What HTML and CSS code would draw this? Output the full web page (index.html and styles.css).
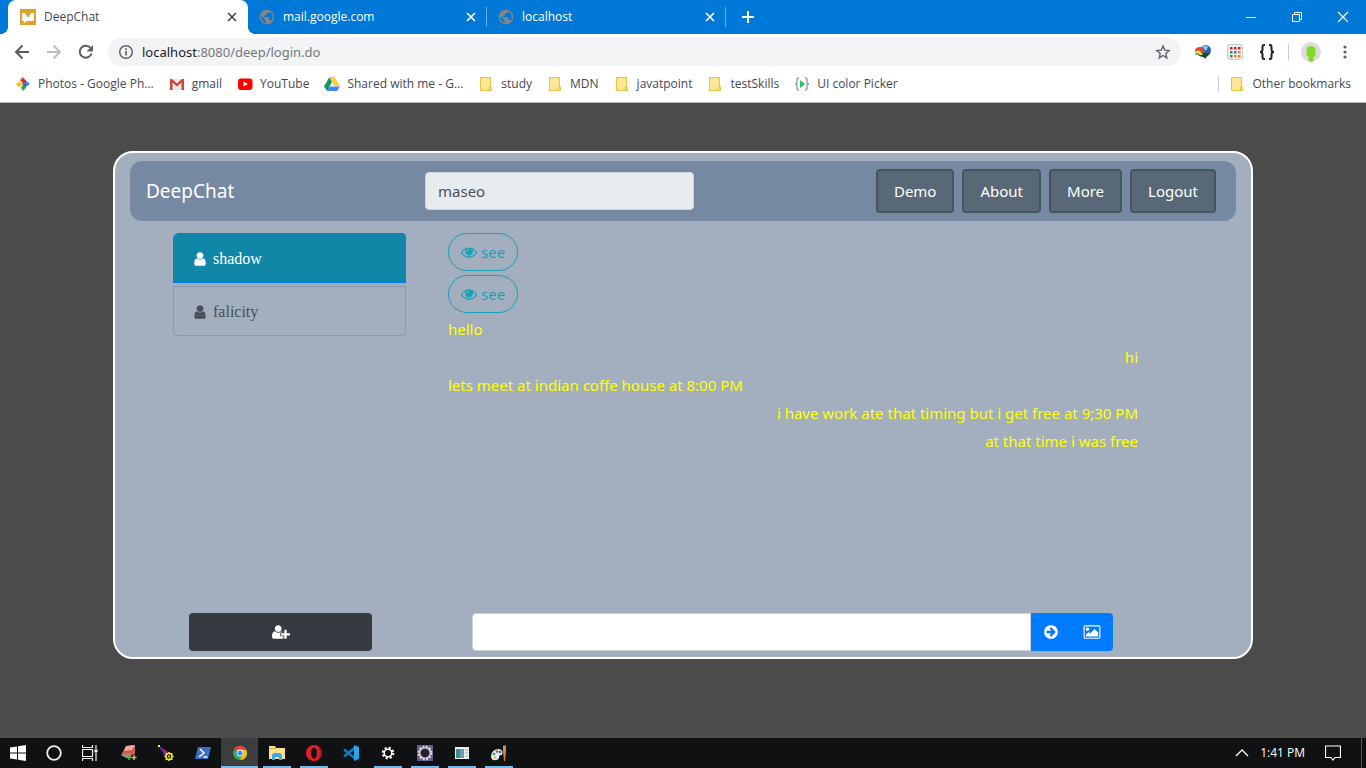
FILE: index.html
```html
<!DOCTYPE html>
<html lang="en">
<head>
<meta charset="utf-8">
<title>DeepChat</title>
<link rel="stylesheet" href="styles.css">
</head>
<body>
<svg class="defs" aria-hidden="true">
  <symbol id="globe" viewBox="1 1 22 22"><path fill="#858585" d="M12 2C6.480 2 2 6.480 2 12s4.480 10 10 10 10-4.480 10-10S17.520 2 12 2zm-1 17.930c-3.950-.49-7-3.850-7-7.930 0-.62.08-1.210.21-1.790L9 15v1c0 1.100.9 2 2 2v1.930zm6.900-2.540c-.26-.81-1-1.390-1.900-1.390h-1v-3c0-.55-.45-1-1-1H8v-2h2c.55 0 1-.45 1-1V7h2c1.100 0 2-.9 2-2v-.41c2.930 1.190 5 4.060 5 7.410 0 2.080-.8 3.970-2.100 5.390z"/></symbol>
  <symbol id="close" viewBox="0 0 16 16"><path d="M4 4l8 8M12 4l-8 8" stroke="currentColor" stroke-width="1.700" fill="none"/></symbol>
  <symbol id="folder" viewBox="0 0 16 16"><path d="M2.500 1.500h10v9.500h1v3.500h-11z" fill="#ffe694" stroke="#e8c342"/><path d="M11.500 14v-3h2v3z" fill="#ffe694" stroke="#e8c342"/></symbol>
  <symbol id="user" viewBox="0 0 1792 1792"><path fill="currentColor" d="M1536 1399q0 109-62.500 187t-150.500 78h-854q-88 0-150.500-78t-62.500-187q0-85 8.500-160.500t31.500-152 58.500-131 94-89 134.500-34.500q131 128 313 128t313-128q76 0 134.500 34.500t94 89 58.500 131 31.500 152 8.500 160.500zm-256-887q0 159-112.500 271.500t-271.500 112.500-271.500-112.500-112.500-271.500 112.500-271.500 271.500-112.500 271.500 112.500 112.500 271.500z"/></symbol>
  <symbol id="eye" viewBox="0 0 1792 1792"><path fill="currentColor" d="M1664 960q-152-236-381-353 61 104 61 225 0 185-131.500 316.500t-316.500 131.500-316.500-131.500-131.500-316.500q0-121 61-225-229 117-381 353 133 205 333.500 326.500t434.500 121.500 434.500-121.500 333.500-326.500zm-720-384q0-20-14-34t-34-14q-125 0-214.500 89.500t-89.500 214.500q0 20 14 34t34 14 34-14 14-34q0-86 61-147t147-61q20 0 34-14t14-34zm848 384q0 34-20 69-140 230-376.500 368.500t-499.500 138.500-499.500-139-376.500-368q-20-35-20-69t20-69q140-229 376.500-368t499.500-139 499.500 139 376.500 368q20 35 20 69z"/></symbol>
</svg>

<header class="browser">
  <div class="tabstrip">
    <div class="tab tab-active">
      <svg class="icon" viewBox="0 0 16 16"><path d="M0 0h16v16H0z" fill="#e0a12b"/><path d="M2 4h3l3 3.500L11 4h3v6.500q0 1.500-1.500 1.500H7l-3.500 2.500L4 12q-2 0-2-1.500z" fill="#fff"/><path d="M5.500 4L8 8l2.500-4" fill="none" stroke="#e0a12b"/></svg>
      <span class="tab-title">DeepChat</span>
      <button class="plain" aria-label="Close DeepChat"><svg class="icon"><use href="#close"/></svg></button>
    </div>
    <div class="tab">
      <svg class="icon"><use href="#globe"/></svg>
      <span class="tab-title">mail.google.com</span>
      <button class="plain" aria-label="Close mail.google.com"><svg class="icon"><use href="#close"/></svg></button>
    </div>
    <div class="tab">
      <svg class="icon"><use href="#globe"/></svg>
      <span class="tab-title">localhost</span>
      <button class="plain" aria-label="Close localhost"><svg class="icon"><use href="#close"/></svg></button>
    </div>
    <button class="plain new-tab" aria-label="New tab"><svg class="icon" viewBox="0 0 16 16"><path d="M8 2v12M2 8h12" stroke="#fff" stroke-width="2"/></svg></button>
    <div class="window-controls">
      <button class="plain" aria-label="Minimize"><svg class="icon" viewBox="0 0 16 16"><path d="M3 8.500h10" stroke="#fff"/></svg></button>
      <button class="plain" aria-label="Restore"><svg class="icon" viewBox="0 0 16 16"><path d="M3.500 5.500h7v7h-7zM5.500 5.500v-2h7v7h-2" stroke="#fff" fill="none"/></svg></button>
      <button class="plain" aria-label="Close"><svg class="icon" viewBox="0 0 16 16"><path d="M3 3l10 10M13 3L3 13" stroke="#fff" stroke-width="1.200"/></svg></button>
    </div>
  </div>

  <div class="toolbar">
    <button class="plain" aria-label="Back"><svg class="icon" viewBox="0 0 16 16"><path d="M15 8H2.500M8.500 1.500L2 8l6.500 6.500" stroke="#5a5d61" stroke-width="2" fill="none"/></svg></button>
    <button class="plain" aria-label="Forward"><svg class="icon" viewBox="0 0 16 16"><path d="M1 8h12.500M7.500 1.500L14 8l-6.500 6.500" stroke="#bcbec1" stroke-width="2" fill="none"/></svg></button>
    <button class="plain" aria-label="Reload"><svg class="icon" viewBox="0 0 16 16"><path d="M13.500 9.500A6 6 0 1 1 12.500 4" stroke="#5a5d61" stroke-width="2" fill="none"/><path d="M15 1v6.500H8.500z" fill="#5a5d61"/></svg></button>
    <div class="address">
      <svg class="icon" viewBox="0 0 16 16"><circle cx="8" cy="8" r="6.300" fill="none" stroke="#5f6368" stroke-width="1.500"/><path d="M8 7v4.500M8 4.200v1.700" stroke="#5f6368" stroke-width="1.700"/></svg>
      <span class="url"><b>localhost</b>:8080/deep/login.do</span>
      <button class="plain" aria-label="Bookmark this page"><svg class="icon" viewBox="0 0 16 16"><path d="M8 2l1.700 4.100 4.500.4-3.400 3 1 4.400L8 11.500l-3.800 2.400 1-4.400-3.400-3 4.500-.4z" stroke="#5f6368" stroke-width="1.400" fill="none"/></svg></button>
    </div>
    <div class="extensions">
      <button class="plain" aria-label="Download manager"><svg class="icon" viewBox="0 0 16 16"><circle cx="10.500" cy="6.500" r="5.500" fill="#2b62a6"/><path d="M7 3q3-3 6 0l-2 4z" fill="#8cc4ee"/><path d="M0 6q1-3 5-3 4 1 5 7H8Q6 5 0 8z" fill="#d94e31"/><path d="M0 7.500q5-3 7.500 3.500H6Q4 7 0 9.500z" fill="#f4d128"/><path d="M0 9.500q4-2 6 2.500H4q-2-2-3-1z" fill="#49a83f"/><path d="M4 11h4V9h6q0 3-3 4v2l-3-2q-3 0-4-2z" fill="#164f1c"/></svg></button>
      <button class="plain" aria-label="Color picker"><svg class="icon" viewBox="0 0 16 16"><rect x=".5" y=".5" width="15" height="15" rx="2" fill="#eee" stroke="#c7c7c7"/><path d="M3 3h2.500v2.500H3zM7 3h2.500v2.500H7zM11 3h2.500v2.500H11z" fill="#d8212b"/><path d="M3 7h2.500v2.500H3zM3 11h2.500v2.500H3z" fill="#2a9d43"/><path d="M7 7h2.500v2.500H7z" fill="#277bd5"/><path d="M11 7h2.500v2.500H11zM7 11h2.500v2.500H7zM11 11h2.500v2.500H11z" fill="#ef842b"/></svg></button>
      <button class="plain" aria-label="JSON viewer"><svg class="icon" viewBox="0 0 16 16"><path d="M6 1H5Q3.500 1 3.500 3v2.500Q3.500 8 1 8q2.500 0 2.500 2.500V13q0 2 1.500 2h1M10 1h1q1.500 0 1.500 2v2.500Q12.500 8 15 8q-2.500 0-2.500 2.500V13q0 2-1.500 2h-1" fill="none" stroke="#222" stroke-width="2"/></svg></button>
      <span class="divider"></span>
      <button class="plain" aria-label="Profile"><svg class="avatar" viewBox="0 0 20 20"><circle cx="10" cy="10" r="10" fill="#dcdcdc"/><path d="M5.500 8q0-4 4.500-4t4.500 4v5q0 2-2 2v4l-2 1-3-1v-4q-2-1-2-3z" fill="#85d828"/></svg></button>
      <button class="plain" aria-label="Menu"><svg class="icon" viewBox="0 0 16 16" fill="#5f6368"><circle cx="8" cy="3" r="1.600"/><circle cx="8" cy="8" r="1.600"/><circle cx="8" cy="13" r="1.600"/></svg></button>
    </div>
  </div>

  <nav class="bookmarks" aria-label="Bookmarks">
    <a href="#"><svg class="icon" viewBox="0 0 16 16"><path d="M8 8L5 4l3-3 2 3z" fill="#e54335"/><path d="M8 8V3l3 1 0 3z" fill="#b9323c"/><path d="M8 8l4-3 3 3-3 2z" fill="#4285f4"/><path d="M8 8h4l-1 4-3-1z" fill="#2f62c4"/><path d="M8 8l3 4-3 3-2-3z" fill="#34a853"/><path d="M8 8l-4 3-3-3 3-2z" fill="#fbbc05"/></svg>Photos - Google Ph...</a>
    <a href="#"><svg class="icon" viewBox="0 0 16 16"><path d="M1 3h14v11H1z" fill="#e8e8e8"/><path d="M1 3h2l5 4.500L13 3h2v11h-2.500V6.500L8 10.500l-4.500-4V14H1z" fill="#d54234"/></svg>gmail</a>
    <a href="#"><svg class="icon" viewBox="0 0 16 16"><rect x="1" y="2.500" width="14.500" height="11.500" rx="3" fill="#f00"/><path d="M6.500 5.500v5l4.500-2.500z" fill="#fff"/></svg>YouTube</a>
    <a href="#"><svg class="icon" viewBox="0 0 16 16"><path d="M5.500 1L0 10.500 3 15 8 6z" fill="#0f9d58"/><path d="M5.500 1h5L16 10h-5.500z" fill="#ffcd40"/><path d="M5.500 10.500H16L13 15H3z" fill="#4285f4"/></svg>Shared with me - G...</a>
    <a href="#"><svg class="icon"><use href="#folder"/></svg>study</a>
    <a href="#"><svg class="icon"><use href="#folder"/></svg>MDN</a>
    <a href="#"><svg class="icon"><use href="#folder"/></svg>javatpoint</a>
    <a href="#"><svg class="icon"><use href="#folder"/></svg>testSkills</a>
    <a href="#"><svg class="icon" viewBox="0 0 16 16"><path d="M5 2Q3 2 3 4v2q0 2-2 2 2 0 2 2v2q0 2 2 2M11 2q2 0 2 2v2q0 2 2 2-2 0-2 2v2q0 2-2 2" fill="none" stroke="#999" stroke-width="1.300"/><path d="M6 4l5 4-5 4z" fill="#1fc95b"/></svg>UI color Picker</a>
    <a href="#" class="other"><svg class="icon"><use href="#folder"/></svg>Other bookmarks</a>
  </nav>
</header>

<main class="page">
  <section class="panel">
    <nav class="navbar">
      <a class="brand" href="#">DeepChat</a>
      <input class="field current-user" type="text" value="maseo" readonly aria-label="Current user">
      <div class="nav-links">
        <button class="nav-button">Demo</button>
        <button class="nav-button">About</button>
        <button class="nav-button">More</button>
        <button class="nav-button">Logout</button>
      </div>
    </nav>
    <div class="content">
      <div class="contacts">
        <a class="contact contact-active" href="#"><svg class="icon"><use href="#user"/></svg>shadow</a>
        <a class="contact" href="#"><svg class="icon"><use href="#user"/></svg>falicity</a>
      </div>
      <div class="messages">
        <button class="see"><svg class="icon"><use href="#eye"/></svg>see</button>
        <button class="see"><svg class="icon"><use href="#eye"/></svg>see</button>
        <p>hello</p>
        <p class="sent">hi</p>
        <p>lets meet at indian coffe house at 8:00 PM</p>
        <p class="sent">i have work ate that timing but i get free at 9;30 PM</p>
        <p class="sent">at that time i was free</p>
      </div>
    </div>
    <div class="composer">
      <button class="add-user" aria-label="Add user"><svg class="wide-icon" viewBox="0 0 2048 1792"><path fill="currentColor" d="M704 896q-159 0-271.500-112.500t-112.500-271.500 112.500-271.500 271.500-112.500 271.500 112.500 112.500 271.500-112.500 271.500-271.500 112.500zm960 128h352q13 0 22.500 9.500t9.500 22.500v192q0 13-9.500 22.500t-22.500 9.500h-352v352q0 13-9.500 22.500t-22.500 9.500h-192q-13 0-22.500-9.500t-9.500-22.500v-352h-352q-13 0-22.500-9.500t-9.500-22.500v-192q0-13 9.500-22.500t22.500-9.500h352v-352q0-13 9.500-22.500t22.500-9.500h192q13 0 22.500 9.500t9.500 22.500v352zm-736 224q0 52 38 90t90 38h256v238q-68 50-171 50h-874q-121 0-194-69t-73-190q0-53 3.500-103.500t14-109 26.500-108.500 43-97.500 62-81 85.500-53.500 111.500-20q19 0 39 17 79 61 154.500 91.500t164.500 30.500 164.500-30.500 154.500-91.500q20-17 39-17 132 0 217 96h-223q-52 0-90 38t-38 90v192z"/></svg></button>
      <form class="message-form">
        <input class="field message-input" type="text" aria-label="Message">
        <button class="send" type="button" aria-label="Send"><svg class="icon" viewBox="0 0 1792 1792"><path fill="currentColor" d="M1413 896q0-27-18-45l-91-91-362-362q-18-18-45-18t-45 18l-91 91q-18 18-18 45t18 45l189 189h-502q-26 0-45 19t-19 45v128q0 26 19 45t45 19h502l-189 189q-18 18-18 45t18 45l91 91q18 18 45 18t45-18l362-362 91-91q18-18 18-45zm251 0q0 209-103 385.500t-279.500 279.500-385.500 103-385.500-103-279.500-279.500-103-385.500 103-385.500 279.500-279.500 385.500-103 385.500 103 279.500 279.500 103 385.500z"/></svg></button>
        <button class="send send-image" type="button" aria-label="Send image"><svg class="wide-icon" viewBox="0 0 2048 1792"><path fill="currentColor" d="M704 576q0 80-56 136t-136 56-136-56-56-136 56-136 136-56 136 56 56 136zm1024 384v448h-1408v-192l320-320 160 160 512-512zm96-704h-1600q-13 0-22.500 9.500t-9.500 22.500v1216q0 13 9.500 22.500t22.500 9.500h1600q13 0 22.500-9.500t9.500-22.500v-1216q0-13-9.500-22.500t-22.500-9.500zm160 32v1216q0 66-47 113t-113 47h-1600q-66 0-113-47t-47-113v-1216q0-66 47-113t113-47h1600q66 0 113 47t47 113z"/></svg></button>
      </form>
    </div>
  </section>
</main>

<footer class="taskbar">
  <div class="system">
    <button class="plain" aria-label="Start"><svg class="icon" viewBox="0 0 16 16"><path d="M0 2.500l7-1v6H0zM8 1.300L16 0v7.500H8zM0 8.500h7v6l-7-1zM8 8.500h8V16l-8-1.200z" fill="#fff"/></svg></button>
    <button class="plain" aria-label="Search"><svg class="icon" viewBox="0 0 16 16"><circle cx="8" cy="8" r="6.800" fill="none" stroke="#eee" stroke-width="1.800"/></svg></button>
    <button class="plain" aria-label="Task view"><svg class="icon" viewBox="0 0 16 16"><path d="M.5 0v2.500h10V0M.5 16v-2.500h10V16M.5 4.500h10v7H.5zM14 0v4M14 8v8" fill="none" stroke="#eee" stroke-width="1.200"/><path d="M12.500 4.500h3v3h-3z" fill="#fff"/></svg></button>
  </div>
  <div class="apps">
    <button class="plain app" aria-label="Image tool"><svg class="icon" viewBox="0 0 16 16"><path d="M5 1l9-1 0 9-9 3-5-2z" fill="#d45b53"/><path d="M5 1l9-1-3 5-8 1z" fill="#f0aaa0"/><path d="M0 10l9-2 1 4-5 1z" fill="#9c8f8b"/><path d="M8 10v5M5.500 12.500h5" stroke="#47bf35" stroke-width="1.500"/><path d="M13 10v5M10.500 12.500h5" stroke="#d3bd25" stroke-width="1.500"/></svg></button>
    <button class="plain app" aria-label="Pen tool"><svg class="icon" viewBox="0 0 16 16"><path d="M1 1l9 6-3 4z" fill="#e11468"/><path d="M2 2l6 9" stroke="#3539c8" stroke-width="1.500"/><path d="M0 0h2v2H0z" fill="#ff0"/><circle cx="11" cy="11.500" r="3" stroke="#f3ed18" stroke-width="1.500" fill="#111"/><path d="M11 7v2M11 14v2M6.500 11.500h2M13.500 11.500h2M7.800 8.300l1.300 1.300M13 13.500l1.300 1.300M14.300 8.300L13 9.600M9 13.500l-1.300 1.300" stroke="#f3ed18" stroke-width="1.500"/><circle cx="11" cy="11.500" r="1" fill="#f3ed18"/></svg></button>
    <button class="plain app" aria-label="PowerShell"><svg class="icon" viewBox="0 0 16 16"><path d="M3 2h13l-3 12H0z" fill="#3b6fc4"/><path d="M5 4l4 4-5 4M8.500 12h4" stroke="#fff" stroke-width="1.500" fill="none"/></svg></button>
    <button class="plain app open current" aria-label="Chrome"><svg class="icon" viewBox="0 0 16 16"><circle cx="8" cy="8" r="7" fill="#34a853"/><path d="M8 8L2 4.300Q4 1 8 1q4.500 0 6.300 4H8z" fill="#ea4335"/><path d="M8 5h6.300Q15 6.500 15 8q0 6.500-7 7l3-6z" fill="#fbbc05"/><circle cx="8" cy="8" r="3.400" fill="#fff"/><circle cx="8" cy="8" r="2.600" fill="#4285f4"/></svg></button>
    <button class="plain app open" aria-label="File Explorer"><svg class="icon" viewBox="0 0 16 16"><path d="M0 1h6l1 2h9v11H0z" fill="#ffe08a"/><path d="M0 3h7l-1 1H0z" fill="#d9a93c"/><path d="M3 15v-4q0-3 3-3h4q3 0 3 3v4h-3v-3H6v3z" fill="#39a7ea"/></svg></button>
    <button class="plain app open" aria-label="Opera"><svg class="icon" viewBox="0 0 16 16"><circle cx="8" cy="8" r="8" fill="#e51c2b"/><path d="M11 1q5 2 5 7t-5 7q3-3 3-7t-3-7z" fill="#a61622"/><ellipse cx="8" cy="8" rx="3" ry="5.500" fill="#111"/></svg></button>
    <button class="plain app" aria-label="Visual Studio Code"><svg class="icon" viewBox="0 0 16 16"><path d="M11.500 3L1 11.500M11.500 13L1 4.500" stroke="#117dc1" stroke-width="2.400"/><path d="M11 0l5 2v12l-5 2z" fill="#27a5ec"/></svg></button>
    <button class="plain app open" aria-label="Settings"><svg class="icon" viewBox="0 0 16 16"><circle cx="8" cy="8" r="5" fill="none" stroke="#fff" stroke-width="2.600" stroke-dasharray="2 1.930"/><circle cx="8" cy="8" r="3.800" fill="none" stroke="#fff" stroke-width="1.500"/></svg></button>
    <button class="plain app open" aria-label="Eclipse"><svg class="icon" viewBox="0 0 16 16"><path d="M0 0h16v16H0z" fill="#69578e"/><circle cx="8" cy="8" r="6.400" fill="none" stroke="#ddd" stroke-width="2" stroke-dasharray="2 1.350"/><circle cx="8" cy="8" r="5.200" fill="#25212e" stroke="#ddd" stroke-width="1.300"/></svg></button>
    <button class="plain app open" aria-label="Console"><svg class="icon" viewBox="0 0 16 16"><path d="M1 2h14v12H1z" fill="#e9eef1"/><path d="M2 4h8v9H2z" fill="#3a9180"/><path d="M6 4h4v9H6z" fill="#6c9bb3"/><path d="M11 5h3M11 8h3M11 11h3" stroke="#aabac5"/></svg></button>
    <button class="plain app open" aria-label="Paint"><svg class="icon" viewBox="0 0 16 16"><path d="M0 11Q1 4 8 4q5 1 3 6-2-1-3 2 0 3-3 3-5 1-5-4z" fill="#d7edf8"/><circle cx="3" cy="9" r="1.300" fill="#339e45"/><circle cx="6" cy="6.500" r="1.300" fill="#db4235"/><circle cx="9" cy="7" r="1.300" fill="#2862c5"/><circle cx="4" cy="12.500" r="1.300" fill="#edb62e"/><path d="M12 1l1.500-1L15 1v5h-3z" fill="#c88b4e"/><path d="M12 6h3l-1 10h-1z" fill="#e77d1e"/></svg></button>
  </div>
  <div class="tray">
    <button class="plain" aria-label="Show hidden icons"><svg class="icon" viewBox="0 0 16 16"><path d="M2 11l6-6 6 6" fill="none" stroke="#fff" stroke-width="1.300"/></svg></button>
    <span class="clock">1:41 PM</span>
    <button class="plain" aria-label="Notifications"><svg class="icon" viewBox="0 0 16 16"><path d="M.5 1h15v11.500H10L8 15l-2-2.500H.5z" fill="none" stroke="#fff" stroke-width="1.200"/></svg></button>
  </div>
</footer>
</body>
</html>
```

FILE: styles.css
```css
* { box-sizing: border-box; }

body {
  margin: 0;
  min-height: 100vh;
  display: flex;
  flex-direction: column;
  background: #4b4b4b;
  font-family: "Noto Sans", "Open Sans", sans-serif;
  font-size: 15px;
  line-height: 24px;
}

a { color: inherit; text-decoration: none; }
button, input { font: inherit; }
.defs { display: none; }
.icon { display: block; flex: none; width: 16px; height: 16px; }
.wide-icon { display: block; width: 18px; height: 16px; }

.plain {
  display: flex;
  align-items: center;
  justify-content: center;
  padding: 0;
  border: 0;
  background: none;
  color: inherit;
}

/* Browser window */
.browser {
  border-bottom: 1px solid #b5b5b5;
  background: #fff;
  font-family: "Open Sans", "Noto Sans", sans-serif;
}

.tabstrip {
  display: flex;
  align-items: center;
  height: 34px;
  padding-left: 8px;
  background: #0078d7;
  color: #fff;
  font-size: 12px;
}

.tab {
  display: flex;
  align-items: center;
  gap: 8px;
  width: 239px;
  height: 20px;
  padding: 0 7px 0 11px;
  border-right: 1px solid #66aee7;
}

.tab-active {
  position: relative;
  width: 240px;
  height: 34px;
  padding: 0 8px 0 12px;
  border: 0;
  border-radius: 8px 8px 0 0;
  background: #fff;
  color: #45494d;
}

/* Flared feet of the selected tab */
.tab-active::before,
.tab-active::after {
  content: "";
  position: absolute;
  bottom: 0;
  width: 8px;
  height: 8px;
}

.tab-active::before { right: 100%; background: radial-gradient(circle at 0 0, transparent 8px, #fff 8px); }
.tab-active::after { left: 100%; background: radial-gradient(circle at 100% 0, transparent 8px, #fff 8px); }

.tab-title { flex: 1; }
.new-tab { width: 44px; height: 34px; }
.window-controls { display: flex; margin-left: auto; height: 28px; }
.window-controls .plain { width: 46px; }

.toolbar {
  display: flex;
  align-items: center;
  gap: 16px;
  height: 36px;
  padding: 0 14px;
}

.address {
  display: flex;
  flex: 1;
  align-items: center;
  gap: 8px;
  height: 28px;
  margin-left: -2px;
  margin-right: -2px;
  padding: 0 10px;
  border-radius: 14px;
  background: #f1f3f4;
  color: #74787c;
  font-size: 13px;
}

.url { flex: 1; font-family: "Noto Sans", sans-serif; }
.url b { color: #202124; font-weight: 400; }
.extensions { display: flex; align-items: center; gap: 16px; }
.extensions .divider { width: 1px; height: 16px; margin: 0 -4px 0 -3px; background: #ccc; }
.avatar { display: block; width: 20px; height: 20px; }
.extensions .plain:last-child { margin-right: -1px; }

.bookmarks {
  display: flex;
  align-items: center;
  gap: 15px;
  height: 32px;
  padding: 0 15px;
  padding-bottom: 4px;
  color: #45494d;
  font-size: 12px;
  white-space: nowrap;
}

.bookmarks a { display: flex; align-items: center; gap: 7px; }
.bookmarks .other { margin-left: auto; padding-left: 10px; border-left: 1px solid #ccc; line-height: 16px; }

/* Chat application */
.page {
  display: flex;
  flex: 1;
  padding: 48px 16px 79px;
}

.panel {
  display: flex;
  flex-direction: column;
  width: 100%;
  max-width: 1140px;
  margin: 0 auto;
  padding: 8px 0 6px;
  border: 2px solid #fff;
  border-radius: 20px;
  background: #a3afbe;
}

.navbar {
  display: grid;
  grid-template-columns: 279fr 269fr 522fr;
  align-items: center;
  margin: 0 15px;
  padding: 8px 20px 8px 16px;
  border-radius: 12px;
  background: #7589a3;
}

.brand { color: #fff; font-size: 19px; }

.field {
  min-width: 0;
  height: 38px;
  padding: 6px 12px;
  border: 1px solid #ced4da;
  border-radius: 4px;
  background: #fff;
  color: #495057;
}

.current-user { background: #e9ecef; }
.nav-links { display: flex; justify-content: flex-end; gap: 8px; }

.nav-button {
  padding: 8px 16px;
  border: 2px solid #465462;
  border-radius: 4px;
  background: #596877;
  color: #fff;
}

.content {
  display: grid;
  grid-template-columns: 233fr 690fr;
  column-gap: 42px;
  flex: 1;
  padding: 12px 113px 0 58px;
}

.contacts { display: flex; flex-direction: column; gap: 3px; }

.contact {
  display: flex;
  align-items: center;
  gap: 5px;
  height: 50px;
  padding: 2px 18px 0;
  border: 1px solid #8e9aa8;
  border-radius: 0 0 4px 4px;
  color: #495057;
  font-family: "Liberation Serif", serif;
  font-size: 16px;
}

.contact-active {
  border-color: #007bff;
  border-radius: 6px 4px 0 0;
  background: #1187a7;
  color: #fff;
}

.messages { display: flex; flex-direction: column; align-items: flex-start; gap: 4px; color: #ff0; }
.messages p { margin: 0; }
.messages .sent { align-self: flex-end; }

.see {
  display: flex;
  align-items: center;
  gap: 4px;
  padding: 6px 12px;
  border: 1px solid #17a2b8;
  border-radius: 20px;
  background: none;
  color: #17a2b8;
}

.composer {
  display: grid;
  grid-template-columns: 183fr 641fr;
  column-gap: 100px;
  padding: 0 138px 0 74px;
}

.add-user {
  display: flex;
  align-items: center;
  justify-content: center;
  border: 0;
  border-radius: 4px;
  background: #343a40;
  color: #fff;
}

.message-form { display: flex; }
.message-input { flex: 1; border-radius: 4px 0 0 4px; }

.send {
  display: flex;
  align-items: center;
  padding: 0 12px;
  border: 0;
  background: #007bff;
  color: #fff;
}

.send-image { border-radius: 0 4px 4px 0; }

/* Taskbar */
.taskbar {
  display: flex;
  height: 30px;
  background: #101112;
  color: #fff;
  font-family: "Open Sans", "Noto Sans", sans-serif;
  font-size: 12px;
}

.system { display: flex; }
.system .plain { width: 36px; }
.apps { display: flex; margin-left: 2px; }
.app { width: 37px; }
.open { background: linear-gradient(#76b9ed, #76b9ed) center bottom / 28px 2px no-repeat; }
.current { background-color: #3c3d3e; background-size: 37px 2px; }
.tray { display: flex; align-items: center; gap: 11px; margin-left: auto; margin-right: 4px; padding-right: 20px; border-right: 1px solid #555; }
.tray .plain:first-child { margin-right: -1px; }
.tray .plain:last-child { margin-left: 9px; }
```
